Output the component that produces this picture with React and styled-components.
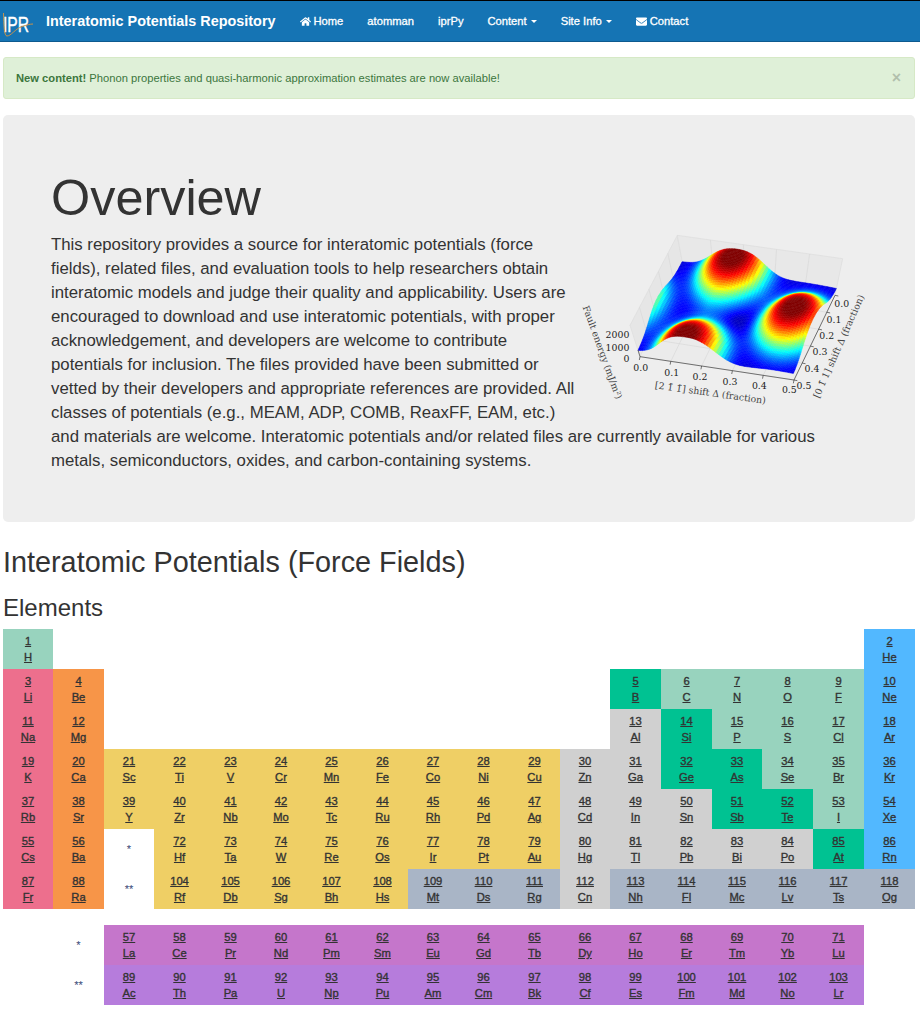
import styled, { createGlobalStyle } from 'styled-components';
import { FaHome, FaEnvelope } from 'react-icons/fa';

const GlobalStyle = createGlobalStyle`
  html, body {
    margin: 0;
    padding: 0;
    background: #fff;
    color: #333;
    font-family: "Liberation Sans", Arial, sans-serif;
  }
  * {
    box-sizing: border-box;
  }
`;

const Navbar = styled.nav`
  display: flex;
  align-items: center;
  height: 42px;
  background: #1574b4;
  border-top: 1px solid #000;
  border-bottom: 1px solid #0d5a8f;
`;

const LogoWrap = styled.a`
  display: block;
  width: 36px;
  height: 40px;
  margin-left: 2px;
  flex: none;
`;

const Brand = styled.a`
  margin-left: 8px;
  color: #fff;
  font-size: 14.4px;
  font-weight: bold;
  white-space: nowrap;
`;

const NavList = styled.ul`
  display: flex;
  list-style: none;
  margin: 0 0 0 12px;
  padding: 0;
`;

const NavItem = styled.li`
  display: flex;
  align-items: center;
  gap: 3px;
  padding: 0 12px;
  color: #fff;
  font-size: 11.2px;
  -webkit-text-stroke: 0.3px #fff;
  white-space: nowrap;
  svg {
    font-size: 11px;
  }
`;

const Caret = styled.span`
  width: 0;
  height: 0;
  margin-left: 1px;
  margin-top: 1px;
  border-top: 3px solid #fff;
  border-left: 3px solid transparent;
  border-right: 3px solid transparent;
`;

const Page = styled.main`
  padding: 15px 5px 7px 3px;
`;

const Alert = styled.div`
  display: flex;
  align-items: center;
  justify-content: space-between;
  height: 42px;
  padding: 0 12px;
  background: #dff0d8;
  border: 1px solid #d6e9c6;
  border-radius: 3px;
  color: #3c763d;
  font-size: 11.2px;
`;

const Close = styled.span`
  color: #000;
  opacity: 0.2;
  font-size: 16px;
  font-weight: bold;
  line-height: 1;
  margin-right: 1px;
`;

const Jumbotron = styled.section`
  height: 407px;
  margin-top: 16px;
  padding: 48px;
  background: #eee;
  border-radius: 5px;
`;

const Title = styled.h1`
  margin: 0 0 1px;
  font-size: 50.4px;
  font-weight: normal;
  line-height: 69px;
  color: #333;
`;

const Intro = styled.p`
  margin: 0;
  font-size: 16.8px;
  line-height: 24px;
  color: #333;
`;

const Figure = styled.svg`
  float: right;
  display: block;
  width: 287px;
  height: 190px;
`;

const SectionTitle = styled.h2`
  margin: 21px 0 0;
  font-size: 28.8px;
  font-weight: normal;
  line-height: 38px;
`;

const SubTitle = styled.h3`
  margin: 12px 0 0;
  font-size: 24px;
  font-weight: normal;
  line-height: 30px;
`;

const Table = styled.div`
  display: grid;
  grid-template-columns: 50px 51px 50px 51px 51px 50px 51px 51px 50px 51px 51px 50px 51px 51px 50px 51px 51px 51px;
  grid-auto-rows: 40px;
  margin-top: ${p => p.$top}px;
`;

const palette = {
  nonmetal: '#98d3be',
  alkali: '#ed6f8d',
  alkaline: '#f79548',
  metalloid: '#00c292',
  noble: '#52b8ff',
  transition: '#efcf65',
  post: '#d0d0d0',
  unknown: '#a9b5c6',
  lanthanide: '#c576cb',
  actinide: '#b67cdc',
};

const Cell = styled.div`
  grid-column: ${p => p.$col};
  grid-row: ${p => p.$row};
  padding: 4px 0;
  background: ${p => palette[p.$kind]};
  text-align: center;
  font-size: 11.2px;
  line-height: 16px;
`;

const CellLink = styled.a`
  display: table;
  margin: 0 auto;
  color: #333;
  -webkit-text-stroke: 0.35px #333;
  text-decoration: underline;
`;

const Star = styled.div`
  grid-column: ${p => p.$col};
  grid-row: ${p => p.$row};
  align-self: center;
  text-align: center;
  font-size: 11.2px;
  line-height: 16px;
  color: #3a4a78;
  background: #fff;
`;

// kinds that are not transition metals or the two lower rows
const kinds = {
  nonmetal: 'H C N O F P S Cl Se Br I',
  alkali: 'Li Na K Rb Cs Fr',
  alkaline: 'Be Mg Ca Sr Ba Ra',
  metalloid: 'B Si Ge As Sb Te At',
  noble: 'He Ne Ar Kr Xe Rn',
  post: 'Al Zn Ga Cd In Sn Hg Tl Pb Bi Po Cn',
  unknown: 'Mt Ds Rg Nh Fl Mc Lv Ts Og',
};

const kindOf = {};
Object.entries(kinds).forEach(([kind, list]) => {
  list.split(' ').forEach(sym => {
    kindOf[sym] = kind;
  });
});

const symbols =
  'H He Li Be B C N O F Ne Na Mg Al Si P S Cl Ar K Ca Sc Ti V Cr Mn Fe Co Ni Cu Zn Ga Ge As Se Br Kr Rb Sr Y Zr Nb Mo Tc Ru Rh Pd Ag Cd In Sn Sb Te I Xe Cs Ba La Ce Pr Nd Pm Sm Eu Gd Tb Dy Ho Er Tm Yb Lu Hf Ta W Re Os Ir Pt Au Hg Tl Pb Bi Po At Rn Fr Ra Ac Th Pa U Np Pu Am Cm Bk Cf Es Fm Md No Lr Rf Db Sg Bh Hs Mt Ds Rg Cn Nh Fl Mc Lv Ts Og'.split(
    ' '
  );

function place(n) {
  if (n === 1) return [1, 1];
  if (n === 2) return [1, 18];
  if (n <= 4) return [2, n - 2];
  if (n <= 10) return [2, n + 8];
  if (n <= 12) return [3, n - 10];
  if (n <= 18) return [3, n];
  if (n <= 36) return [4, n - 18];
  if (n <= 54) return [5, n - 36];
  if (n <= 56) return [6, n - 54];
  if (n >= 57 && n <= 71) return [8, n - 54];
  if (n <= 86) return [6, n - 68];
  if (n <= 88) return [7, n - 86];
  if (n >= 89 && n <= 103) return [9, n - 86];
  return [7, n - 100];
}

function kindFor(n, sym) {
  if (n >= 57 && n <= 71) return 'lanthanide';
  if (n >= 89 && n <= 103) return 'actinide';
  return kindOf[sym] || 'transition';
}

const elements = symbols.map((sym, i) => {
  const n = i + 1;
  const [row, col] = place(n);
  return { n, sym, row, col, kind: kindFor(n, sym) };
});

function ElementCell({ el, rowOffset }) {
  return (
    <Cell $col={el.col} $row={el.row - rowOffset} $kind={el.kind}>
      <CellLink>{el.n}</CellLink>
      <CellLink>{el.sym}</CellLink>
    </Cell>
  );
}

// fault energy plot, in a space of 3x the page pixels
const floor = { a: [210, 392], b: [672, 462], c: [795, 208], d: [340, 125] };
const lift = { a: [-30, -94], b: [-10, -100], c: [23, -110], d: [-18, -97] };

function bilinear(q, u, v) {
  const mix = i =>
    (q.d[i] * (1 - u) + q.c[i] * u) * (1 - v) + (q.a[i] * (1 - u) + q.b[i] * u) * v;
  return [mix(0), mix(1)];
}

const peaks = [
  [0.36, 0.09],
  [0.33, 0.97],
  [0.87, 0.52],
  [-0.19, 0.52],
];

function energy(u, v) {
  let sum = 0;
  peaks.forEach(([pu, pv]) => {
    const du = u - pu;
    const dv = v - pv;
    const r = (du * du) / 0.042 + (dv * dv) / 0.105;
    sum += Math.exp(-Math.pow(r, 1.4));
  });
  return Math.min(sum, 1);
}

// colour value: the peaks plus a slow rise away from the central minimum
function shade(u, v) {
  const du = (u - 0.5) / 0.2;
  const dv = (v - 0.53) / 0.3;
  const rim = Math.min(1, Math.sqrt(du * du + dv * dv));
  return Math.min(1, energy(u, v) * 0.94 + rim * 0.08);
}

function jet(t) {
  const ramp = x => Math.round(255 * Math.max(0, Math.min(1, 1.5 - Math.abs(4 * t - x))));
  return `rgb(${ramp(3)},${ramp(2)},${ramp(1)})`;
}

function surfacePoint(u, v) {
  const [x, y] = bilinear(floor, u, v);
  const [dx, dy] = bilinear(lift, u, v);
  const h = energy(u, v) * 0.68 + 0.18;
  return [x + dx * h, y + dy * h];
}

const GRID = 64;
const surface = [];
for (let j = 0; j < GRID; j++) {
  for (let i = 0; i < GRID; i++) {
    const u0 = i / GRID;
    const u1 = (i + 1) / GRID;
    const v0 = j / GRID;
    const v1 = (j + 1) / GRID;
    surface.push({
      key: `${i}-${j}`,
      points: [
        surfacePoint(u0, v0),
        surfacePoint(u1, v0),
        surfacePoint(u1, v1),
        surfacePoint(u0, v1),
      ]
        .map(p => p.map(n => n.toFixed(1)).join(','))
        .join(' '),
      color: jet(shade((u0 + u1) / 2, (v0 + v1) / 2)),
    });
  }
}

const lerp = (p, q, t) => [p[0] + (q[0] - p[0]) * t, p[1] + (q[1] - p[1]) * t];
const topA = [180, 298];
const topD = [322, 28];
const topC = [818, 98];
const gridSteps = [0.2, 0.4, 0.6, 0.8];

function pane(pts) {
  return pts.map(p => p.join(',')).join(' ');
}

function FaultPlot() {
  const { a, b, c, d } = floor;
  const tickFont = { fontFamily: '"DejaVu Serif", serif', fontSize: 28, fill: '#222' };
  const labelFont = { fontFamily: '"DejaVu Serif", serif', fontSize: 28, fill: '#444' };
  const bottomTicks = [
    ['0.0', 212, 435],
    ['0.1', 305, 449],
    ['0.2', 390, 463],
    ['0.3', 480, 477],
    ['0.4', 568, 490],
    ['0.5', 658, 502],
  ];
  const rightTicks = [
    ['0.0', 815, 243],
    ['0.1', 792, 292],
    ['0.2', 770, 340],
    ['0.3', 750, 388],
    ['0.4', 726, 438],
    ['0.5', 702, 488],
  ];
  const heightTicks = [
    ['2000', 178, 337],
    ['1000', 178, 375],
    ['0', 178, 407],
  ];
  return (
    <Figure viewBox="30 21 861 570" aria-label="Fault energy surface">
      <polygon points={pane([a, topA, topD, d])} fill="#e6e6e6" stroke="#dcdcdc" strokeWidth="2" />
      <polygon points={pane([d, topD, topC, c])} fill="#e8e8e8" stroke="#dcdcdc" strokeWidth="2" />
      <polygon points={pane([a, b, c, d])} fill="#ebebeb" stroke="#dcdcdc" strokeWidth="2" />
      {gridSteps.map(t => (
        <g key={t} stroke="#d8d8d8" strokeWidth="2" fill="none">
          <polyline points={pane([lerp(a, b, t), lerp(d, c, t), lerp(topD, topC, t)])} />
          <polyline points={pane([lerp(c, b, t), lerp(d, a, t), lerp(topD, topA, t)])} />
        </g>
      ))}
      {surface.map(q => (
        <polygon key={q.key} points={q.points} fill={q.color} stroke={q.color} strokeWidth="1.5" />
      ))}
      <g stroke="#333" strokeWidth="2" fill="none">
        <polyline points={pane([[a[0] - 6, a[1] - 20], a, b, c])} />
        {[0, 0.2, 0.4, 0.6, 0.8, 1].map(t => {
          const p = lerp(a, b, t);
          const q = lerp(b, c, t);
          return (
            <g key={t}>
              <line x1={p[0]} y1={p[1]} x2={p[0] - 2} y2={p[1] + 10} />
              <line x1={q[0]} y1={q[1]} x2={q[0] + 10} y2={q[1] + 2} />
            </g>
          );
        })}
      </g>
      {bottomTicks.concat(rightTicks).map(([t, x, y]) => (
        <text key={`${x}-${y}`} x={x} y={y} textAnchor="middle" style={tickFont}>
          {t}
        </text>
      ))}
      {heightTicks.map(([t, x, y]) => (
        <text key={y} x={x} y={y} textAnchor="end" style={tickFont}>
          {t}
        </text>
      ))}
      <text transform="translate(420 510) rotate(8)" textAnchor="middle" style={labelFont}>
        [2 1̄ 1̄] shift Δ (fraction)
      </text>
      <text transform="translate(815 365) rotate(-66)" textAnchor="middle" style={labelFont}>
        [0 1̄ 1] shift Δ (fraction)
      </text>
      <text transform="translate(88 382) rotate(70)" textAnchor="middle" style={labelFont}>
        Fault energy (mJ/m²)
      </text>
    </Figure>
  );
}

function Logo() {
  return (
    <LogoWrap>
      <svg width="36" height="40" viewBox="0 0 36 40">
        <text
          transform="translate(1 31) scale(1 1.4)"
          fill="#fff"
          stroke="#fff"
          strokeWidth="0.3"
          fontFamily='"Liberation Sans", sans-serif'
          fontSize="15.6"
        >
          IPR
        </text>
        <path
          d="M1.5 12 C2 24 2 35 5 35 C9 35 13 28 20 25.5 C25 24 28 23 31 23"
          fill="none"
          stroke="#c9924a"
          strokeWidth="1"
        />
      </svg>
    </LogoWrap>
  );
}

export default function App() {
  const main = elements.filter(el => el.row <= 7);
  const lower = elements.filter(el => el.row > 7);
  return (
    <>
      <GlobalStyle />
      <Navbar>
        <Logo />
        <Brand>Interatomic Potentials Repository</Brand>
        <NavList>
          <NavItem>
            <FaHome />
            Home
          </NavItem>
          <NavItem>atomman</NavItem>
          <NavItem>iprPy</NavItem>
          <NavItem>
            Content <Caret />
          </NavItem>
          <NavItem>
            Site Info <Caret />
          </NavItem>
          <NavItem>
            <FaEnvelope />
            Contact
          </NavItem>
        </NavList>
      </Navbar>
      <Page>
        <Alert>
          <span>
            <strong>New content!</strong> Phonon properties and quasi-harmonic approximation estimates
            are now available!
          </span>
          <Close>×</Close>
        </Alert>
        <Jumbotron>
          <Title>Overview</Title>
          <FaultPlot />
          <Intro>
            This repository provides a source for interatomic potentials (force fields), related files,
            and evaluation tools to help researchers obtain interatomic models and judge their quality
            and applicability. Users are encouraged to download and use interatomic potentials, with
            proper acknowledgement, and developers are welcome to contribute potentials for inclusion.
            The files provided have been submitted or vetted by their developers and appropriate
            references are provided. All classes of potentials (e.g., MEAM, ADP, COMB, ReaxFF, EAM, etc.)
            and materials are welcome. Interatomic potentials and/or related files are currently
            available for various metals, semiconductors, oxides, and carbon-containing systems.
          </Intro>
        </Jumbotron>
        <SectionTitle>Interatomic Potentials (Force Fields)</SectionTitle>
        <SubTitle>Elements</SubTitle>
        <Table $top={6}>
          {main.map(el => (
            <ElementCell key={el.n} el={el} rowOffset={0} />
          ))}
          <Star $col={3} $row={6}>*</Star>
          <Star $col={3} $row={7}>**</Star>
        </Table>
        <Table $top={16}>
          <Star $col={2} $row={1}>*</Star>
          <Star $col={2} $row={2}>**</Star>
          {lower.map(el => (
            <ElementCell key={el.n} el={el} rowOffset={7} />
          ))}
        </Table>
      </Page>
    </>
  );
}
